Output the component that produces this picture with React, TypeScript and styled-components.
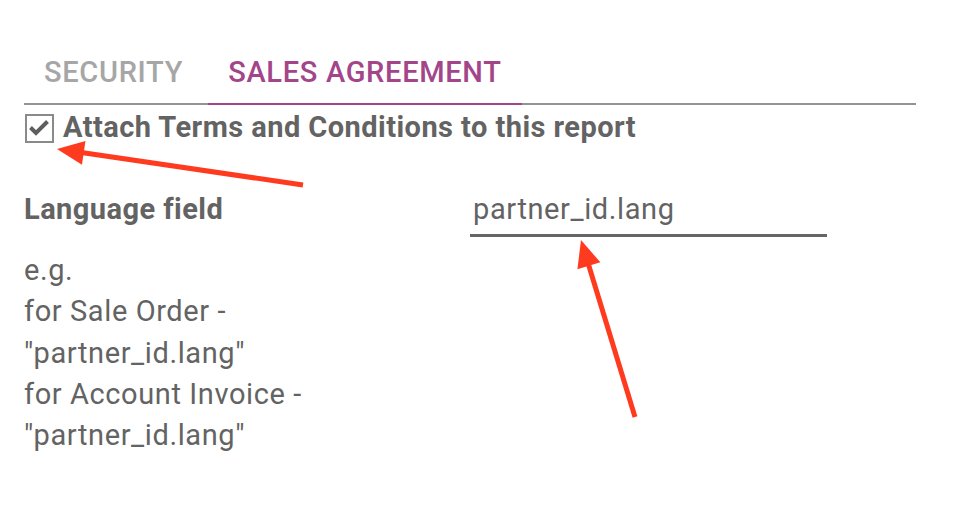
import React from "react";
import styled, { createGlobalStyle } from "styled-components";

const GlobalStyle = createGlobalStyle`
  html, body {
    margin: 0;
    padding: 0;
    background: #fff;
  }
  body {
    font-family: Roboto, "Liberation Sans", sans-serif;
    color: #636363;
  }
`;

const Page = styled.div`
  position: relative;
  width: 958px;
  height: 521px;
  overflow: hidden;
  box-sizing: border-box;
  padding: 48px 42px 0 24px;
`;

const TabBar = styled.div`
  display: flex;
  gap: 5px;
  border-bottom: 2px solid #939393;
`;

const Tab = styled.div<{ $active?: boolean }>`
  padding: 7px 20px 14px;
  font-size: 29px;
  font-weight: 500;
  letter-spacing: 0.7px;
  line-height: 34px;
  text-transform: uppercase;
  color: ${({ $active }) => ($active ? "#a24689" : "#a6a6a6")};
  border-bottom: 2px solid ${({ $active }) => ($active ? "#a24689" : "transparent")};
  margin-bottom: -2px;
`;

const CheckRow = styled.label`
  display: flex;
  align-items: flex-start;
  gap: 9px;
  margin-top: 5px;
  font-size: 29px;
  font-weight: 700;
  letter-spacing: 0.45px;
  line-height: 34px;
`;

const Box = styled.span`
  box-sizing: border-box;
  flex: none;
  width: 29px;
  height: 29px;
  margin: 4px 0 0 1px;
  border: 2px solid #8a8a8a;
  display: flex;
  align-items: center;
  justify-content: center;
`;

const Form = styled.div`
  display: grid;
  grid-template-columns: 446px 357px;
  margin-top: 48px;
`;

const FieldLabel = styled.div`
  font-size: 29px;
  font-weight: 700;
  letter-spacing: 0.45px;
  line-height: 34px;
`;

const Help = styled.div`
  margin-top: 24px;
  font-size: 29px;
  letter-spacing: 0.6px;
  line-height: 41.3px;
`;

const Input = styled.div`
  align-self: start;
  font-size: 29px;
  letter-spacing: 0.6px;
  line-height: 34px;
  padding: 0 0 8px 3px;
  border-bottom: 3px solid #666;
`;

const Overlay = styled.svg`
  position: absolute;
  left: 0;
  top: 0;
  pointer-events: none;
`;

const Arrow = ({ x1, y1, x2, y2 }: { x1: number; y1: number; x2: number; y2: number }) => {
  const a = Math.atan2(y2 - y1, x2 - x1);
  const len = 27;
  const half = 12;
  const bx = x2 - Math.cos(a) * len;
  const by = y2 - Math.sin(a) * len;
  const px = -Math.sin(a) * half;
  const py = Math.cos(a) * half;
  return (
    <g fill="#ff3b1f" stroke="#ff3b1f">
      <line x1={x1} y1={y1} x2={bx + Math.cos(a) * 4} y2={by + Math.sin(a) * 4} strokeWidth={5} />
      <polygon points={`${x2},${y2} ${bx + px},${by + py} ${bx - px},${by - py}`} stroke="none" />
    </g>
  );
};

export default function App() {
  return (
    <>
      <GlobalStyle />
      <Page>
        <TabBar>
          <Tab>Security</Tab>
          <Tab $active>Sales Agreement</Tab>
        </TabBar>
        <CheckRow>
          <Box>
            <svg width="25" height="25" viewBox="0 0 25 25">
              <path d="M3.5 11.5 L9 17 L20.5 5.5" fill="none" stroke="#5e5e5e" strokeWidth="4" />
            </svg>
          </Box>
          Attach Terms and Conditions to this report
        </CheckRow>
        <Form>
          <div>
            <FieldLabel>Language field</FieldLabel>
            <Help>
              e.g.
              <br />
              for Sale Order -
              <br />
              "partner_id.lang"
              <br />
              for Account Invoice -
              <br />
              "partner_id.lang"
            </Help>
          </div>
          <Input>partner_id.lang</Input>
        </Form>
        <Overlay width="958" height="521" viewBox="0 0 958 521">
          <Arrow x1={303} y1={185} x2={57} y2={149} />
          <Arrow x1={635} y1={417} x2={581} y2={240} />
        </Overlay>
      </Page>
    </>
  );
}
